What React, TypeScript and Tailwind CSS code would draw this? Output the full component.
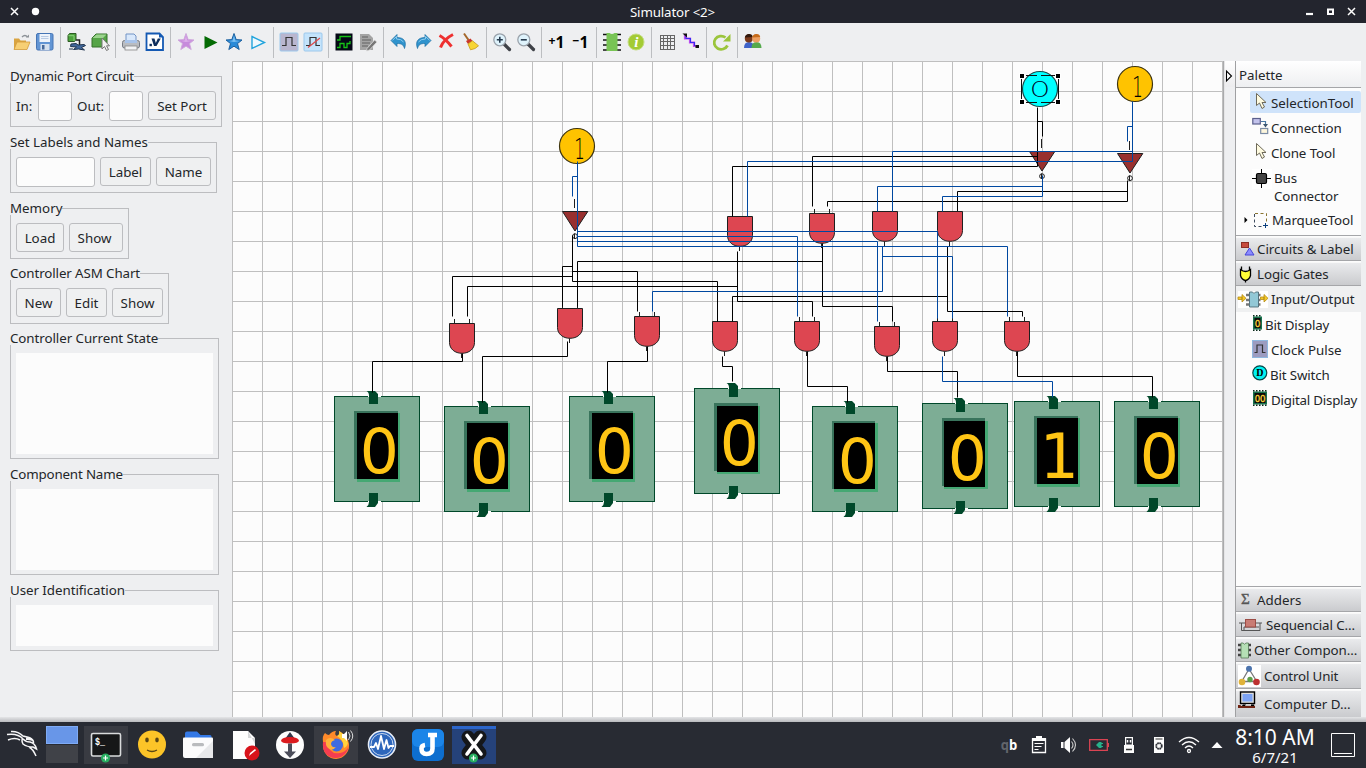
import React from "react";

const DARK = "#1f1f1f";
const BLUE = "#0048a0";

/* ---------- helpers ---------- */

function Ic({ children, w = 20, h = 20, className = "" }: { children: React.ReactNode; w?: number; h?: number; className?: string }) {
  return (
    <svg width={w} height={h} viewBox={`0 0 ${w} ${h}`} className={`block shrink-0 overflow-visible ${className}`}>
      {children}
    </svg>
  );
}

const star = "M10 1.5 L12.2 7.6 L18 8 L13.5 11.6 L15.2 17.5 L10 14.2 L4.8 17.5 L6.5 11.6 L2 8 L7.8 7.6 Z";

/* ---------- toolbar ---------- */

const OpenIcon = () => (
  <Ic>
    <path d="M3 17 V6.5 h5 l1.5 2 H15 V17z" fill="#d9a441" />
    <path d="M3 17.5 L6 10 H19 L16 17.5z" fill="#f7cf74" stroke="#d39a3a" strokeWidth=".8" />
    <path d="M11 5 q3-3 5.5 0" stroke="#8d9298" strokeWidth="1.4" fill="none" />
    <path d="M15 5.5 h3 v-3z" fill="#8d9298" />
  </Ic>
);
const SaveIcon = () => (
  <Ic>
    <rect x="1.5" y="1.5" width="16.5" height="16.5" rx="1.5" fill="#6295d4" stroke="#4675b5" />
    <rect x="4.5" y="2" width="10.5" height="8" fill="#eef3fa" />
    <path d="M6 4.5h7.5M6 6.5h7.5" stroke="#a9bfdd" strokeWidth=".8" />
    <rect x="5.5" y="12" width="9" height="6" fill="#d5e0ee" />
    <rect x="7" y="13" width="2.5" height="4.5" fill="#47699a" />
  </Ic>
);
const ChipDropIcon = () => (
  <Ic>
    <path d="M2 3.5 l1.5-2 h6.500 v6 l-1.500 2 H2z" fill="#4ca23c" stroke="#2c5b23" />
    <path d="M2.5 3.700h5.500V9" stroke="#8bd07c" fill="none" />
    <path d="M10 8h3.500v6" stroke="#222" strokeWidth="1.5" fill="none" />
    <path d="M5 12 l5-.5 2 1.500 6-.5 1.500 1 -4 2 3 2.500 -6 -1 -5 .5 3-2.500 -6 -.5z" fill="#41689c" stroke="#20344f" />
    <path d="M3 17 h4" stroke="#20344f" />
  </Ic>
);
const ChipPickIcon = () => (
  <Ic>
    <path d="M2 6 l4-4 h11 v9 l-4 4 H2z" fill="#55a447" stroke="#35702a" />
    <path d="M2.5 6 l4-3.5 h10 L13 6z" fill="#9bd48d" />
    <path d="M12 6 v11 l2.5-2.5 2 4 2-1 -2-3.7 h3z" fill="#f4f4f4" stroke="#777" />
  </Ic>
);
const PrintIcon = () => (
  <Ic>
    <path d="M5 2 h8 l2 2 v6 H5z" fill="#d9e8fb" stroke="#7293c5" />
    <rect x="1.5" y="8.5" width="17" height="7.5" rx="2" fill="#b9bcc1" stroke="#777c85" />
    <path d="M4 8h12v3H4z" fill="#a7c3ea" />
    <rect x="4" y="14" width="12" height="4" fill="#f2f3f5" stroke="#888" strokeWidth=".8" />
  </Ic>
);
const VerilogIcon = () => (
  <Ic>
    <path d="M1.5 1.5 h13 l3.5 3.5 V18 H1.5z" fill="#fff" stroke="#1459b3" strokeWidth="1.8" />
    <path d="M14 1.5 v4 h4z" fill="#1459b3" />
    <path d="M6.500 6.5 h3 l1.3 4.500 2-4.500 h3 L11.500 14 H9z" fill="#0f2f5e" />
    <rect x="4.500" y="11.800" width="2.4" height="2.4" fill="#0f2f5e" />
  </Ic>
);
const StarIcon = ({ blue }: { blue?: boolean }) => (
  <Ic>
    <path d={star} fill={blue ? "#2a8bd8" : "#c78bdc"} stroke={blue ? "#1d609f" : "#cfa8dc"} strokeWidth="1" />
    <path d="M10 3.5 L11.3 8.5 16 9 10 10 5 9 8.6 8.5z" fill={blue ? "#7cc0f2" : "#dcaeea"} />
  </Ic>
);
const PlayIcon = () => (
  <Ic>
    <path d="M4.5 4 L17.5 10.5 L4.5 17z" fill="#046b04" />
  </Ic>
);
const PlayOutlineIcon = () => (
  <Ic>
    <path d="M4 4.5 L16.5 10.5 L4 16.5z" fill="#eff8fd" stroke="#22a4dc" strokeWidth="1.4" />
  </Ic>
);
const PulseIcon = ({ off }: { off?: boolean }) => (
  <Ic>
    <rect x="1" y="1" width="18" height="18" rx="1" fill={off ? "#c4e3fb" : "#b9b6cf"} stroke="#9cc8ec" />
    <path d="M3 13.500 h4 V5.500 h6 v8 h4" stroke="#333" strokeWidth="1.2" fill="none" />
    {off && <path d="M5 15.500 L17 6" stroke="#e04848" strokeWidth="1.2" />}
  </Ic>
);
const ScopeIcon = () => (
  <Ic>
    <rect x="1.5" y="1.5" width="17" height="17" fill="#050816" />
    <path d="M3 8 h3 V4.5 h11 M3 15.5 h3 v-4 h4 v4 h3 v-4 h3 V9" stroke="#17c217" strokeWidth="1.3" fill="none" />
  </Ic>
);
const EditDocIcon = () => (
  <Ic>
    <path d="M2 2 h9 l4 4 v12 H2z" fill="#a4a4a4" />
    <path d="M4 5h6M4 8h9M4 11h8M4 14h6" stroke="#777" strokeWidth="1.4" />
    <path d="M9 16.5 l7.5-8.5 2.5 2 -7.5 8 -3 1z" fill="#777" stroke="#ddd" strokeWidth=".8" />
  </Ic>
);
const UndoIcon = ({ flip }: { flip?: boolean }) => (
  <Ic className={flip ? "-scale-x-100" : ""}>
    <path d="M2 8.5 L8 2.5 V5.5 C15 5.5 18 9.5 15.5 16.5 C14.5 12.5 12.5 11.5 8 11.5 V14.5z" fill="#2f93cd" stroke="#1b6fa4" strokeWidth=".7" />
    <path d="M3.5 8.3 L7.5 4.5 V7 q5 0 7 3" fill="none" stroke="#8ccbed" strokeWidth="1" />
  </Ic>
);
const DeleteIcon = () => (
  <Ic className="-ml-[3px]">
    <path d="M3.500 3.500 C8 6 12 10 15.500 14.500 M17 2.500 C12 5 7 9 4.500 15.500" stroke="#ee3030" strokeWidth="3" fill="none" />
  </Ic>
);
const BroomIcon = () => (
  <Ic className="-ml-[2px]">
    <path d="M4 1.500 L8.500 8" stroke="#a4672a" strokeWidth="2" />
    <path d="M6 9 l4.500-2.500 2 2.500 -4.500 3z" fill="#c9372c" />
    <path d="M8 12 l4.500-3.2 6 5 q-3 3.5-8 4z" fill="#f7d535" stroke="#c79a1c" strokeWidth=".8" />
  </Ic>
);
const ZoomIcon = ({ minus }: { minus?: boolean }) => (
  <Ic>
    <path d="M12 12 L17.5 17.5" stroke="#3f4248" strokeWidth="3.2" strokeLinecap="round" />
    <circle cx="7.8" cy="7.8" r="6" fill="#dff3fc" stroke="#9aa2ab" strokeWidth="1.3" />
    <path d={minus ? "M4.8 7.8h6" : "M4.8 7.8h6M7.8 4.8v6"} stroke="#263a4d" strokeWidth="1.6" />
  </Ic>
);
const ChipIcon = () => (
  <Ic>
    <path d="M1 2.5h4M1 8h4M1 13h4M1 18h4M15 2.5h4M15 8h4M15 13h4M15 18h4" stroke="#111" strokeWidth="1.4" />
    <path d="M4.5 1 h3 q2.5 2 5 0 h3 v18 h-11z" fill="#78c455" />
  </Ic>
);
const InfoIcon = () => (
  <Ic>
    <circle cx="10" cy="10" r="8" fill="#a3cb35" stroke="#c4dd83" />
    <text x="10.3" y="15" textAnchor="middle" fontSize="15" fontWeight="700" fontStyle="italic" fill="#fff" fontFamily="Liberation Serif, serif">i</text>
  </Ic>
);
const GridIcon = () => (
  <Ic>
    <path d="M3 3.500h15M3 6.500h15M3 9.500h15M3 13.500h15M3 17.500h15M3.500 3v15M6.500 3v15M10.500 3v15M13.500 3v15M17.500 3v15" stroke="#666" strokeWidth="1" />
  </Ic>
);
const RouteIcon = () => (
  <Ic>
    <path d="M4 3 V6.5 H9 V10.5 H13 V14 H17" stroke="#c04df0" strokeWidth="2.2" fill="none" />
    <path d="M5 4 V6.5 H9.5 V10.5 H13.5 V14" stroke="#3a2cf2" strokeWidth="1.1" fill="none" />
    <path d="M1.5 1.5 h4.5 v4z M14.5 13 h3.5 v3 h-3.5z" fill="#111" />
  </Ic>
);
const RefreshIcon = () => (
  <Ic>
    <path d="M15.5 13.5 A7 6.6 0 1 1 13.5 5.5" stroke="#9bc53c" strokeWidth="2.8" fill="none" />
    <path d="M18.5 2 V9.5 H11z" fill="#9bc53c" />
  </Ic>
);
const PeopleIcon = () => (
  <Ic>
    <path d="M1 16 q0-6 5-6 t5 6z" fill="#3f63c9" />
    <circle cx="5.8" cy="6.500" r="4" fill="#7b3a1c" />
    <path d="M1.800 5.500 q1-4 4.5-3.5 3 0 3.5 3z" fill="#33190c" />
    <path d="M8.500 16 q0-6 5-6 t5 6z" fill="#55aa4c" />
    <circle cx="13.2" cy="6.500" r="4" fill="#eda062" />
    <path d="M9.200 5.500 q1-4 4.5-3.5 3 0 3.5 3z" fill="#c66b1b" />
  </Ic>
);
const StepIcon = ({ sign }: { sign: string }) => (
  <Ic>
    <text x="1.5" y="12.500" fontSize="12" fontWeight="700" fill="#000" fontFamily="Noto Sans, sans-serif" textLength="7" lengthAdjust="spacingAndGlyphs">{sign}</text>
    <text x="8.6" y="15.5" fontSize="16.500" fontWeight="700" fill="#000" fontFamily="Noto Sans, sans-serif" textLength="9" lengthAdjust="spacingAndGlyphs">1</text>
  </Ic>
);

const toolbarGroups: React.ReactNode[][] = [
  [<OpenIcon />, <SaveIcon />],
  [<ChipDropIcon />, <ChipPickIcon />],
  [<PrintIcon />, <VerilogIcon />],
  [<StarIcon />, <PlayIcon />, <StarIcon blue />, <PlayOutlineIcon />],
  [<PulseIcon />, <PulseIcon off />],
  [<ScopeIcon />, <EditDocIcon />],
  [<UndoIcon />, <UndoIcon flip />, <DeleteIcon />, <BroomIcon />],
  [<ZoomIcon />, <ZoomIcon minus />],
  [<StepIcon sign="+" />, <StepIcon sign="−" />],
  [<ChipIcon />, <InfoIcon />],
  [<GridIcon />, <RouteIcon />],
  [<RefreshIcon />],
  [<PeopleIcon />],
];

function Toolbar() {
  return (
    <div className="flex h-[38px] items-center pl-[9px]">
      {toolbarGroups.map((g, i) => (
        <React.Fragment key={i}>
          {i > 0 && <div className="mx-[3px] h-[31px] w-px bg-[#bcbec1]" />}
          {g.map((icon, j) => (
            <div key={j} className="flex w-6 justify-center">{icon}</div>
          ))}
        </React.Fragment>
      ))}
    </div>
  );
}

/* ---------- left panel ---------- */

function Group({ title, className, tracking = "", children }: { title: string; className: string; tracking?: string; children: React.ReactNode }) {
  return (
    <div className={`shrink-0 border border-[#bcbdc0] ${className}`}>
      <div className={`-mt-[8px] -ml-px h-[14px] w-fit bg-[#eeeff1] leading-[14px] whitespace-nowrap ${tracking}`}>{title}</div>
      {children}
    </div>
  );
}
const Btn = ({ children, className }: { children: React.ReactNode; className: string }) => (
  <button className={`h-[29px] rounded-[3px] border border-[#bcbdc0] bg-[#eff0f1] pt-[2px] leading-none ${className}`}>{children}</button>
);
const Field = ({ className }: { className: string }) => (
  <div className={`h-[30px] rounded-[3px] border border-[#bcbdc0] bg-[#fcfcfc] ${className}`} />
);

function LeftPanel() {
  return (
    <div className="flex w-[232px] flex-col pt-[15px] pl-[10px]">
      <Group title="Dynamic Port Circuit" tracking="tracking-[-0.2px]" className="h-[51px] w-[212px]">
        <div className="mt-[8px] ml-[5px] flex items-start">
          <span className="w-[22px] leading-[30px]">In:</span>
          <Field className="w-[34px]" />
          <span className="ml-[5px] w-[32px] leading-[30px]">Out:</span>
          <Field className="w-[34px]" />
          <Btn className="ml-[5px] w-[68px]">Set Port</Btn>
        </div>
      </Group>
      <Group title="Set Labels and Names" className="mt-[15px] h-[51px] w-[207px]">
        <div className="mt-[8px] ml-[5px] flex gap-[5px]">
          <Field className="w-[79px]" />
          <Btn className="w-[51px]">Label</Btn>
          <Btn className="w-[55px]">Name</Btn>
        </div>
      </Group>
      <Group title="Memory" className="mt-[15px] h-[51px] w-[119px]">
        <div className="mt-[8px] ml-[5px] flex gap-[5px]">
          <Btn className="w-[48px]">Load</Btn>
          <Btn className="w-[54px] pr-[3px]">Show</Btn>
        </div>
      </Group>
      <Group title="Controller ASM Chart" tracking="tracking-[-0.1px]" className="mt-[14px] h-[51px] w-[159px]">
        <div className="mt-[8px] ml-[5px] flex gap-[5px]">
          <Btn className="w-[45px]">New</Btn>
          <Btn className="w-[41px]">Edit</Btn>
          <Btn className="w-[51px]">Show</Btn>
        </div>
      </Group>
      <Group title="Controller Current State" tracking="tracking-[-0.06px]" className="mt-[14px] h-[121px] w-[209px]">
        <div className="mx-[5px] mt-[8px] h-[101px] bg-[#fcfcfc]" />
      </Group>
      <Group title="Component Name" tracking="tracking-[-0.16px]" className="mt-[15px] h-[101px] w-[209px]">
        <div className="mx-[5px] mt-[8px] h-[81px] bg-[#fcfcfc]" />
      </Group>
      <Group title="User Identification" tracking="tracking-[-0.05px]" className="mt-[15px] h-[61px] w-[209px]">
        <div className="mx-[5px] mt-[8px] h-[41px] bg-[#fcfcfc]" />
      </Group>
    </div>
  );
}

/* ---------- circuit ---------- */

const gates: [number, number][] = [
  [727, 216], [809, 213], [872, 211], [937, 211],
  [449, 323], [557, 308], [634, 316], [712, 321], [794, 321], [874, 326], [932, 321], [1004, 321],
];

const inverters: [number, number][] = [[562, 211], [1029, 151], [1117, 153]];

type Display = { x: number; y: number; v: string; dx?: number; dy?: number };
const displays: Display[] = [
  { x: 334, y: 396, v: "0" },
  { x: 444, y: 406, v: "0" },
  { x: 569, y: 396, v: "0" },
  { x: 694, y: 388, v: "0", dy: 1 },
  { x: 812, y: 406, v: "0", dx: -1 },
  { x: 922, y: 403, v: "0", dx: -1, dy: 1 },
  { x: 1014, y: 401, v: "1" },
  { x: 1114, y: 401, v: "0" },
];

const blackWires = [
  "M572 235V281H717V321", "M572 266H562V306", "M572 271H637V311", "M572 276H452V316",
  "M467 316V286H737", "M737 251V301H812V316", "M577 306V261H822", "M822 243V306H892V321",
  "M732 321V296H947", "M947 246V311H1022V316",
  "M1037 107V166H732V216", "M1037 156H812V206", "M1037 121H1042V136",
  "M1127 180V201H827V206", "M1127 191H957V210",
  "M462 353V361H372V392", "M567 341V356H482V402", "M647 346V361H607V392", "M722 356V366H732V381",
  "M807 351V386H847V402", "M887 356V371H957V397", "M1017 351V376H1152V397",
];
const blueWires = [
  "M577 161V246H1007V316", "M577 176H572V196", "M577 231H937V318", "M577 236H797V316", "M577 241H877V321",
  "M652 311V291H882V246", "M882 256H952V318",
  "M1132 101V161H747V216", "M1132 151H892V211", "M1132 126H1127V141",
  "M1042 175V196H942V211", "M1042 186H877V211",
  "M942 356V381H1052V397",
];

function Gate({ x, y }: { x: number; y: number }) {
  return (
    <g transform={`translate(${x} ${y})`} stroke={DARK}>
      <path d="M.5 .5H25.5V19.5C25.5 26 20 30.3 13 30.3S.5 26 .5 19.5Z" fill="#dd4651" />
      <path d="M5.5 -4V0M20.5 -4V0M12.5 30.5V35" fill="none" />
    </g>
  );
}

function BitDisplay({ x, y, v, dx = 0, dy = 0 }: Display) {
  return (
    <g transform={`translate(${x} ${y})`}>
      <rect x=".5" y=".5" width="85" height="105" fill="#7dad95" stroke="#00482a" />
      <g transform={`translate(${dx} 0)`}>
        <path d="M34 .5H47M34 105.5H47" stroke="#fcfcfc" />
        <path d="M35 1H44V3H35ZM35 103H44V105H35Z" fill="#7dad95" />
        <path d={`M32.5 -5H41L44 -2V${8 + dy}H35V0Q35 -4 32.5 -5Z`} fill="#00482a" />
        <path d={`M35 ${97 + dy}H44V107L41 111H32.5Q35 109 35 106Z`} fill="#00482a" />
      </g>
      <rect x="20" y="15" width="44" height="68" fill="#39745c" />
      <rect x={23 + dx} y="17" width={43 - dx} height="69" fill="#45a873" />
      <rect x="20" y={83 + dy} width={3 + dx} height="3" fill="#7dad95" />
      <rect x={64 + dx} y="15" width={2 - dx} height={2 + dy} fill="#7dad95" />
      {dy > 0 && <rect x={23 + dx} y="17" width="41" height="1" fill="#39745c" />}
      <rect x={23 + dx} y={17 + dy} width="41" height="66" fill="#000" />
      <text x="45.2" y="77" textAnchor="middle" fontSize="61.5" fill="#ffc515" fontFamily="DejaVu Sans, sans-serif">{v}</text>
    </g>
  );
}

function Switch({ x, y }: { x: number; y: number }) {
  return (
    <g transform={`translate(${x} ${y})`}>
      <circle r="17.5" fill="#ffc300" stroke="#3d3410" strokeWidth="1.2" />
      <text transform="translate(-.7 13) scale(.6 1)" fontSize="28" fontWeight="200" fill="#000" fontFamily="DejaVu Sans Light, DejaVu Sans, sans-serif" textAnchor="middle" x="5.5">1</text>
    </g>
  );
}

function Canvas() {
  const vs = Array.from({ length: 34 }, (_, i) => 232 + i * 30);
  const hs = Array.from({ length: 22 }, (_, i) => 61 + i * 30);
  return (
    <svg width="991" height="656" viewBox="232 61 991 656" className="block shrink-0 bg-[#fcfcfc]">
      <g fill="#bfbfbf">
        {vs.map((x) => <rect key={x} x={x} y="61" width="1" height="656" />)}
        {hs.map((y) => <rect key={y} x="232" y={y} width="991" height="1" />)}
      </g>
      {gates.map(([x, y]) => <Gate key={`${x}`} x={x} y={y} />)}
      {inverters.map(([x, y]) => (
        <g key={x} transform={`translate(${x} ${y})`} stroke={DARK}>
          <path d="M.5 .5H25.8L13 20Z" fill="#98302f" />
          <circle cx="13" cy="25.2" r="2.4" fill="none" />
          <path d="M12.5 -12V-3M12.5 22.500V28" />
        </g>
      ))}
      {displays.map((d) => <BitDisplay key={d.x} {...d} />)}
      <Switch x={577} y={146} />
      <Switch x={1135} y={84} />
      <circle cx="1040" cy="89" r="17.5" fill="#00ffff" stroke="#174a4a" strokeWidth="1.2" />
      <text transform="translate(1040 96.5) scale(1.2 1)" textAnchor="middle" fontSize="20.5" fontWeight="200" fill="#002" fontFamily="DejaVu Sans Light, DejaVu Sans, sans-serif">O</text>
      <path d="M1026 75.500H1037M1041 75.500H1055M1026 102.500H1037M1041 102.500H1055M1021.500 79V100M1058.500 79V100" fill="none" stroke="#111" />
      {[1022, 1058].map((x) => [76, 102].map((y) => (
        <rect key={`${x}-${y}`} x={x - 2.5} y={y - 2.5} width="5" height="5" fill="#000" stroke="#fff" strokeWidth="1" />
      )))}
      <g transform="translate(.5 .5)" fill="none">
        <g stroke="#000">{blackWires.map((d) => <path key={d} d={d} />)}</g>
        <g stroke={BLUE}>{blueWires.map((d) => <path key={d} d={d} />)}</g>
      </g>
    </svg>
  );
}

/* ---------- palette ---------- */

const Cursor = () => (
  <Ic w={14} h={18}>
    <path d="M2.5 1.5V13.5L5.5 11L8 16.5L10.5 15L8 10.5H12Z" fill="#fffbe0" stroke="#6e6a5a" />
  </Ic>
);
const ConnIcon = () => (
  <Ic w={18} h={18}>
    <rect x=".8" y="1.5" width="7.5" height="5.5" fill="#c3c3ec" stroke="#5a5f8c" strokeWidth="1.2" />
    <rect x="8.7" y="11.5" width="7" height="5" fill="#fdf6dc" stroke="#7b8ca5" strokeWidth="1.2" />
    <path d="M9 4.5h4.5V8" stroke="#4a7aa5" strokeWidth="1.2" fill="none" />
    <path d="M11 7h5l-2.5 3.5z" fill="#3c556e" />
  </Ic>
);
const BusIcon = () => (
  <Ic w={20} h={20}>
    <rect width="20" height="20" fill="#fff" />
    <path d="M9.500 0V19M0 9.500H19" stroke="#000" />
    <rect x="4.5" y="4.5" width="10" height="10" rx="1.5" fill="#444" stroke="#000" strokeWidth="1.2" />
  </Ic>
);
const Marquee = () => (
  <Ic w={16} h={17}>
    <path d="M2 1.5H13.500V10" stroke="#8a7430" fill="none" strokeDasharray="3 2.5" />
    <path d="M1.5 2V14.5H9" stroke="#3d4b5e" fill="none" strokeDasharray="3 2.5" />
    <path d="M12.5 11V16M10 13.5H15" stroke="#0a3f7d" />
  </Ic>
);
const CircuitsIcon = () => (
  <Ic w={16} h={16}>
    <rect x="1.5" y="1.5" width="7" height="5" fill="#c74c3e" stroke="#8c2f26" />
    <path d="M5 14 L9.5 7 L14 14Z" fill="#8c8cff" stroke="#4646d8" />
  </Ic>
);
const GatesIcon = () => (
  <Ic w={14} h={17}>
    <path d="M2.5 .5V5M10.5 .5V5M6.5 13V16.5" stroke="#000" strokeWidth="1.3" />
    <path d="M1.5 3.5Q6.5 7.5 11.5 3.5V9.5Q10.5 13.5 6.5 14.5Q2.5 13.5 1.5 9.5Z" fill="#ffff37" stroke="#000" strokeWidth="1.3" />
  </Ic>
);
const IOIcon = () => (
  <Ic w={30} h={17}>
    <rect width="30" height="17" fill="#fff" />
    <path d="M8 4h4M8 9h4M8 13.5h4M20 4h2.500M20 9h2.500M20 13.5h2.500" stroke="#777" strokeWidth="2.4" />
    <path d="M0 6H4V8.500H0ZM4 3.500L8 7.300L4 11ZM22.500 6H26V8.500H22.500ZM26 3.500L30 7.300L26 11Z" fill="#f3c928" stroke="#b58b14" strokeWidth=".8" />
    <path d="M11.5 1H14.5Q16 4 17.5 1H20.5V16H11.5Z" fill="#92c8d6" stroke="#56747f" />
  </Ic>
);
function MiniDisplay({ text, w }: { text: string; w: number }) {
  return (
    <Ic w={w} h={16}>
      <rect x="1" y="1.5" width={w - 2} height="13" fill="#17724c" />
      <path d={`M1 .8H${w - 1}M1 15.2H${w - 1}`} stroke="#08291a" strokeWidth="1.6" strokeDasharray="1.5 1.5" />
      <rect x="2.5" y="3" width={w - 5} height="10" fill="#0a0a0a" />
      <text x={w / 2} y="11.5" textAnchor="middle" fontSize="9.5" fill="#ffd53a" stroke="#ffd53a" strokeWidth=".3" fontFamily="DejaVu Sans, sans-serif" textLength={w - 5.5} lengthAdjust="spacingAndGlyphs">{text}</text>
    </Ic>
  );
}
const ClockPulse = () => (
  <Ic w={16} h={18}>
    <rect x=".5" y=".5" width="15" height="17" fill="#9c9cc0" stroke="#8fb8e0" />
    <path d="M2.5 12.5H5V5H10.5V12.5H13.5" stroke="#333" strokeWidth="1.2" fill="none" />
  </Ic>
);
const BitSwitch = () => (
  <Ic w={16} h={16}>
    <circle cx="7.8" cy="7.8" r="7" fill="#00f2f2" stroke="#064545" strokeWidth="1.2" />
    <text x="7.9" y="11.200" textAnchor="middle" fontSize="10" fontWeight="700" fill="#000" fontFamily="Liberation Serif, serif">D</text>
  </Ic>
);
const Sigma = () => (
  <Ic w={14} h={14}>
    <text x="1" y="11" fontSize="15" fill="#555" stroke="#555" strokeWidth=".4" fontFamily="Liberation Serif, serif">Σ</text>
  </Ic>
);
const SeqIcon = () => (
  <Ic w={23} h={14}>
    <path d="M0 5H23M2.5 5V12.5H21V5M5 12V9H20" stroke="#555" fill="none" />
    <rect x="6.5" y="1.5" width="10" height="7.5" fill="#c97c74" stroke="#9c4d46" />
  </Ic>
);
const OtherIcon = () => (
  <Ic w={14} h={17}>
    <path d="M0 3h4M0 8h4M0 13h4M9 3h4M9 8h4M9 13h4" stroke="#444" strokeWidth="2.6" />
    <path d="M3 1H5Q6.500 3.5 8 1H10.500V16H3Z" fill="#b5dfb5" stroke="#567856" strokeWidth=".8" />
  </Ic>
);
const ControlIcon = () => (
  <Ic w={23} h={22}>
    <rect width="23" height="22" fill="#fff" />
    <path d="M11 4L4 16M11 4L18.5 16M4 16.5H18.5" stroke="#777" strokeWidth="1.3" />
    <circle cx="11" cy="3.8" r="3" fill="#4c74ae" />
    <circle cx="4" cy="17" r="3.3" fill="#e0b33a" />
    <circle cx="12" cy="14.5" r="2.7" fill="#5c9e49" />
    <circle cx="18.5" cy="17" r="3.3" fill="#bd3030" />
  </Ic>
);
const ComputerIcon = () => (
  <Ic w={18} h={18}>
    <rect x="2.5" y="1" width="14" height="11.5" fill="#ddd" stroke="#000" strokeWidth="1.4" />
    <rect x="4.5" y="3" width="10" height="7.5" fill="#7da3f3" />
    <path d="M5 13.5H16L16.5 16H3Z" fill="#000" />
    <path d="M2.5 14H0V17H17V15H3Z" fill="#6e2312" />
    <path d="M8 13.3h5v1.5h-6z" fill="#fff" />
  </Ic>
);

function Tool({ icon, label, className = "", iw }: { icon: React.ReactNode; label: string; className?: string; iw: string }) {
  return (
    <div className={`flex h-[25px] items-center ${className}`}>
      <div className={`flex shrink-0 items-center ${iw}`}>{icon}</div>
      <span className="whitespace-nowrap">{label}</span>
    </div>
  );
}
function Drawer({ icon, label, iw, className = "h-[25px]" }: { icon: React.ReactNode; label: string; iw: string; className?: string }) {
  return (
    <div className={`flex flex-col border-t border-[#a5a6a9] pt-px ${className}`}>
      <div className="flex flex-1 items-center border-t border-[#f8f8f8] bg-linear-to-b from-[#eaebed] to-[#cacbce] pl-px">
        <div className={`flex shrink-0 items-center ${iw}`}>{icon}</div>
        <span className="whitespace-nowrap">{label}</span>
      </div>
    </div>
  );
}

function Palette() {
  return (
    <div className="flex w-[143px] border-l border-[#a9aaac]">
      <div className="w-[11px] border-l border-[#e5e5e6]">
        <div className="flex h-[26px] items-center bg-linear-to-b from-white to-[#ececee]">
          <Ic w={10} h={14} className="mt-1">
            <path d="M1.5 2V12L6.5 7Z" fill="#fff" stroke="#000" strokeWidth="1.1" />
          </Ic>
        </div>
      </div>
      <div className="flex w-[126px] flex-col overflow-hidden border-l border-[#9fa0a2] bg-[#fcfcfc]">
        <div className="flex h-[27px] items-center border-b border-[#a5a6a9] bg-linear-to-b from-white to-[#eeeff1] pl-[3px] pt-[2px]">Palette</div>
        <div className="flex flex-col pt-[2px]">
          <div className="pt-[1px] pb-[2px]">
            <Tool icon={<Cursor />} label="SelectionTool" iw="w-[21px] pl-[4px] pb-1" className="ml-[14px] !h-[22px] rounded-[2px] bg-[#cfe3fa] pt-[2px]" />
          </div>
          <Tool icon={<ConnIcon />} label="Connection" iw="w-[35px] pl-[16px] pb-1" className="tracking-[-0.08px]" />
          <Tool icon={<Cursor />} label="Clone Tool" iw="w-[35px] pl-[18px] pb-1" className="tracking-[-0.08px]" />
          <div className="flex h-[44px] pt-[4px]">
            <div className="w-[38px] pl-[16px]"><BusIcon /></div>
            <div className="leading-[18px] tracking-[-0.1px]">Bus<br />Connector</div>
          </div>
          <div className="flex h-[22px] items-center">
            <div className="flex w-[36px] items-center gap-[5px] pl-[8px]">
              <Ic w={4} h={8}><path d="M.5 1V7L3.5 4Z" fill="#000" /></Ic>
              <Marquee />
            </div>
            <span className="tracking-[-0.08px]">MarqueeTool</span>
          </div>
        </div>
        <Drawer icon={<CircuitsIcon />} label="Circuits & Label" iw="w-[20px] pl-[3px]" className="mt-[4px] h-[25px]" />
        <Drawer icon={<GatesIcon />} label="Logic Gates" iw="w-[20px] pl-[2px]" className="h-[25px] tracking-[-0.08px]" />
        <div className="flex h-[27px] items-center border-t border-[#a5a6a9] bg-[#eff0f1]">
          <div className="w-[35px] pl-[2px]"><IOIcon /></div>
          <span>Input/Output</span>
        </div>
        <Tool icon={<MiniDisplay text="0" w={11} />} label="Bit Display" iw="w-[29px] pl-[16px] pb-1" className="tracking-[-0.15px]" />
        <Tool icon={<ClockPulse />} label="Clock Pulse" iw="w-[35px] pl-[16px] pb-0.5" />
        <Tool icon={<BitSwitch />} label="Bit Switch" iw="w-[34px] pl-[16px] pb-1" className="tracking-[-0.15px]" />
        <Tool icon={<MiniDisplay text="00" w={16} />} label="Digital Display" iw="w-[35px] pl-[16px] pb-1" className="tracking-[-0.22px]" />
        <div className="flex-1" />
        <Drawer icon={<Sigma />} label="Adders" iw="w-[20px] pl-[3px]" />
        <Drawer icon={<SeqIcon />} label="Sequencial C..." iw="w-[29px] pl-[2px]" className="h-[25px] tracking-[-0.1px]" />
        <Drawer icon={<OtherIcon />} label="Other Compon..." iw="w-[17px] pl-px" className="h-[25px] tracking-[-0.05px]" />
        <Drawer icon={<ControlIcon />} label="Control Unit" iw="w-[27px] pl-px" className="h-[27px] tracking-[-0.15px]" />
        <Drawer icon={<ComputerIcon />} label="Computer D..." iw="w-[27px] pl-px pb-2" className="h-[29px]" />
      </div>
    </div>
  );
}

/* ---------- taskbar ---------- */

const Plus = ({ x, y }: { x: number; y: number }) => (
  <g>
    <circle cx={x} cy={y} r="4.5" fill="#27ae60" />
    <path d={`M${x - 2.5} ${y}h5M${x} ${y - 2.5}v5`} stroke="#fff" strokeWidth="1.2" />
  </g>
);

const tasks: { bg: string; icon: React.ReactNode }[] = [
  { bg: "bg-[#393b42]", icon: <>
      <rect x="7.5" y="7.5" width="29" height="22.5" rx="1.5" fill="#161718" stroke="#d9dbdc" strokeWidth="1.6" />
      <text x="11" y="19" fontSize="10" fontWeight="700" fill="#fff" fontFamily="Liberation Mono, monospace" textLength="10" lengthAdjust="spacingAndGlyphs">$_</text>
      <Plus x={21.5} y={32} /></> },
  { bg: "", icon: <>
      <circle cx="22" cy="18.5" r="14" fill="#fcc428" />
      <ellipse cx="17" cy="14" rx="1.8" ry="2.4" fill="#5b4714" /><ellipse cx="27" cy="14" rx="1.8" ry="2.4" fill="#5b4714" />
      <path d="M17 24q5 3 10 0" stroke="#5b4714" strokeWidth="1.3" fill="none" /></> },
  { bg: "", icon: <>
      <path d="M9 18V7.5q0-2 2-2H21L24.5 9H34q1.5 0 1.5 1.5V18z" fill="#3378e6" />
      <path d="M8 11.5H36q1 0 1 1V30q0 2-2 2H9q-2 0-2-2V12.5q0-1 1-1z" fill="#fbfbfc" />
      <path d="M37 15V32H20z" fill="#e7e8ea" />
      <rect x="16" y="17" width="12" height="3.2" rx="1.5" fill="#b9bbbe" /></> },
  { bg: "", icon: <>
      <path d="M11 5H26L33 12V33H11z" fill="#fdfdfd" />
      <path d="M26 5V12H33V18z" fill="#d5d6d8" />
      <circle cx="30" cy="27" r="7.5" fill="#d8131b" />
      <path d="M27 30l1-3 5-4 1 1.3-5 4z" fill="#fff" /></> },
  { bg: "", icon: <>
      <circle cx="22" cy="19" r="14" fill="#fdfdfd" />
      <path d="M17 13L22 6L27 13Z" fill="#343548" />
      <path d="M13 14.5q1-3.5 9-3.5t9 3.5q0 3-9 3t-9-3z" fill="#db1a1e" />
      <path d="M20 17.5h4v8h4L22 32 16 25.5h4z" fill="#4b4d5a" /></> },
  { bg: "bg-[#393b42]", icon: <>
      <path d="M9 16Q8 10 11 7Q13 9 15 9Q18 5 22 5Q20 9 23 10Q26 9 25 5Q31 8 34 14Q37 22 32 28Q26 35 17 32Q8 28 9 16Z" fill="#ff8a2a" />
      <path d="M9 16Q8 23 12 28Q18 34 27 31Q33 28 35 20Q32 26 26 27Q15 29 13 16Z" fill="#f63d50" />
      <path d="M25 5Q32 9 34 17Q33 21 30 22Q29 13 23 10Q26 9 25 5Z" fill="#ffd23e" />
      <circle cx="22.5" cy="19" r="6.5" fill="#3f6be0" />
      <path d="M12 14Q16 10 21 14Q17 15 17 18Q18 22 22 21Q18 26 14 22Q11 19 12 14Z" fill="#ffb13a" />
      <path d="M28 8h2l3-3V15L30 12h-2z" fill="#fff" /><path d="M34.5 6q3 4 0 8M36.500 4.5q4.5 5.5 0 11" stroke="#ddd" fill="none" /></> },
  { bg: "", icon: <>
      <circle cx="22" cy="18.5" r="13.5" fill="#2d66bb" stroke="#e8eef8" strokeWidth="1.6" />
      <circle cx="22" cy="18.5" r="11" fill="none" stroke="#c9d8ee" strokeWidth="1" />
      <path d="M10 21h4l2-4 2 6 3-13 3 13 2.5-9 2 8 1.5-2H34" stroke="#fff" strokeWidth="1.8" fill="none" strokeLinejoin="round" /></> },
  { bg: "", icon: <>
      <rect x="6" y="3" width="32" height="32" rx="6" fill="#0d6ecf" />
      <rect x="6" y="3" width="32" height="18" rx="6" fill="#1b85e8" />
      <path d="M22 9H31M26.500 8.500V22.5Q26.500 28 20.500 28Q15.500 28 15.500 22.500Q15.500 19.500 19 19" stroke="#fff" strokeWidth="4.6" fill="none" /></> },
  { bg: "bg-[#25427a] border-t-[3px] border-[#2c66cb]", icon: <>
      <path d="M16 11L28 27M28 11L16 27" stroke="#15171a" strokeWidth="13" strokeLinecap="round" />
      <path d="M15 9.500L29 28M29 9.500L15 28" stroke="#fff" strokeWidth="3.6" strokeLinecap="round" />
      <Plus x={21.5} y={32} /></> },
];

const trayIcons: React.ReactNode[] = [
  <text x="10" y="14.5" textAnchor="middle" fontSize="15" fontWeight="700" fontFamily="Open Sans, sans-serif" textLength="16.5" lengthAdjust="spacingAndGlyphs"><tspan fill="#62656b">q</tspan><tspan fill="#fff">b</tspan></text>,
  <g stroke="#fcfcfc" fill="none"><path d="M3.5 4V17.5H16.5V4z" strokeWidth="1.3" /><path d="M3 4.5H17M7 2.5H13" strokeWidth="3" /><path d="M5.5 8.5h9M5.5 11.5h7M5.5 14.5h4" strokeWidth="1.2" /></g>,
  <g><path d="M2 7H4.5V13H2zM5.5 7L11 2V18L5.5 13z" fill="#fcfcfc" /><path d="M12.5 6.5q3 3.5 0 7M13.5 3.5q6 6.5 0 13" stroke="#ccc" strokeWidth="1.1" fill="none" /></g>,
  <g><path d="M.7 4.7H18.3V15.3H.7z" stroke="#da4453" strokeWidth="1.3" fill="none" /><path d="M18 8h2v4h-2z" fill="#da4453" /><path d="M7 10L10 7H12.5V13H10z" fill="#27b08a" /><path d="M12 8.5h2M12 11.5h2" stroke="#27b08a" /></g>,
  <g><path d="M6.6 2.6H13.4V10H6.6z" stroke="#fcfcfc" strokeWidth="1.2" fill="none" /><path d="M8.5 5v2.5M11.5 5v2.5" stroke="#fcfcfc" strokeWidth="1.5" /><path d="M5 10H15V18H5z" fill="#fcfcfc" /><path d="M7 14.5h6" stroke="#333" strokeWidth="1.5" /></g>,
  <g><path d="M5 2H15V18H5z" fill="#fcfcfc" /><path d="M6.5 4h7" stroke="#333" /><circle cx="10" cy="11" r="2.8" stroke="#292c33" strokeWidth="1.8" fill="none" strokeDasharray="1.7 .5" /></g>,
  <g stroke="#fcfcfc" fill="none" strokeWidth="1.3"><path d="M0 7Q10-2 20 7M3 10Q10 3.5 17 10M6 13Q10 9 14 13" /><circle cx="10" cy="16" r="1.5" /></g>,
];

function Taskbar() {
  return (
    <div className="flex h-[46px] bg-[#282b33] text-[#fcfcfc]">
      <div className="w-[46px] pt-[8px] pl-[6px]">
        <Ic w={33} h={28}>
          <path d="M1 4.5Q12 3 17 9Q20 12 24 12Q29 13 30.5 19L27 17Q21 17 17 14Q15 10 17 8M5 1.5Q12 1 17 6L23 7.5Q28 9.5 27.5 13M2 10Q9 7 14 10M23 17Q27 19 30 26" fill="none" stroke="#f6f6f7" strokeWidth="1.5" />
          <path d="M20 7.5Q26 6 28 12Q25 9.5 20 10z" fill="#f6f6f7" />
        </Ic>
      </div>
      <div className="flex w-[32px] flex-col pt-[4px]">
        <div className="h-[18px] border border-[#7fabf5] bg-[#6896e8]" />
        <div className="mt-[1px] h-[18px] bg-[#404248]" />
      </div>
      <div className="ml-[6px] flex gap-[2px] pt-[4px]">
        {tasks.map((t, i) => (
          <div key={i} className={`h-[38px] w-[44px] overflow-hidden ${t.bg}`}>
            <Ic w={44} h={38} className={i === 8 ? "-mt-[3px]" : ""}>{t.icon}</Ic>
          </div>
        ))}
      </div>
      <div className="ml-[503px] flex items-center gap-[10px]">
        {trayIcons.map((t, i) => <Ic key={i}>{t}</Ic>)}
        <Ic w={12} h={20} className="ml-[2px]"><path d="M.5 13L6 7L11.5 13Z" fill="#fcfcfc" /></Ic>
      </div>
      <div className="ml-[9px] flex w-[86px] flex-col items-center">
        <div className="mt-[2px] text-[21px] leading-[26px] whitespace-nowrap">8:10 AM</div>
        <div className="-mt-px text-[15px] leading-[16px]">6/7/21</div>
      </div>
      <Ic w={26} h={46} className="ml-[12px]">
        <path d="M1.5 11.5H24.5V34.5H1.5ZM4 31.5H22" stroke="#fcfcfc" fill="none" />
      </Ic>
    </div>
  );
}

export default function App() {
  return (
    <div className="flex h-[768px] w-[1366px] flex-col overflow-hidden bg-[#eeeff1] font-['Noto_Sans',sans-serif] text-[13.33px] leading-[18px] text-[#232629]">
      <div className="grid h-[23px] grid-cols-3 items-center bg-[#23252e] text-[#fcfcfc]">
        <Ic w={48} h={22}>
          <path d="M11 7L18 14M18 7L11 14" stroke="#fcfcfc" strokeWidth="1.5" />
          <circle cx="35.5" cy="10.5" r="3.7" fill="#fff" />
        </Ic>
        <div className="pr-[21px] text-center tracking-[-0.15px]">Simulator &lt;2&gt;</div>
        <div className="flex justify-end">
          <Ic w={66} h={22}>
            <path d="M6 13h7" stroke="#fcfcfc" strokeWidth="2.2" />
            <path d="M28 8.5h5v4.5h-5z" stroke="#fcfcfc" strokeWidth="2" fill="none" />
            <path d="M48 7L55 14M55 7L48 14" stroke="#fcfcfc" strokeWidth="1.5" />
          </Ic>
        </div>
      </div>
      <Toolbar />
      <div className="flex h-[656px]">
        <LeftPanel />
        <Canvas />
        <Palette />
      </div>
      <div className="h-[5px] bg-linear-to-b from-[#e4e5e7] to-[#b9babd]" />
      <Taskbar />
    </div>
  );
}
